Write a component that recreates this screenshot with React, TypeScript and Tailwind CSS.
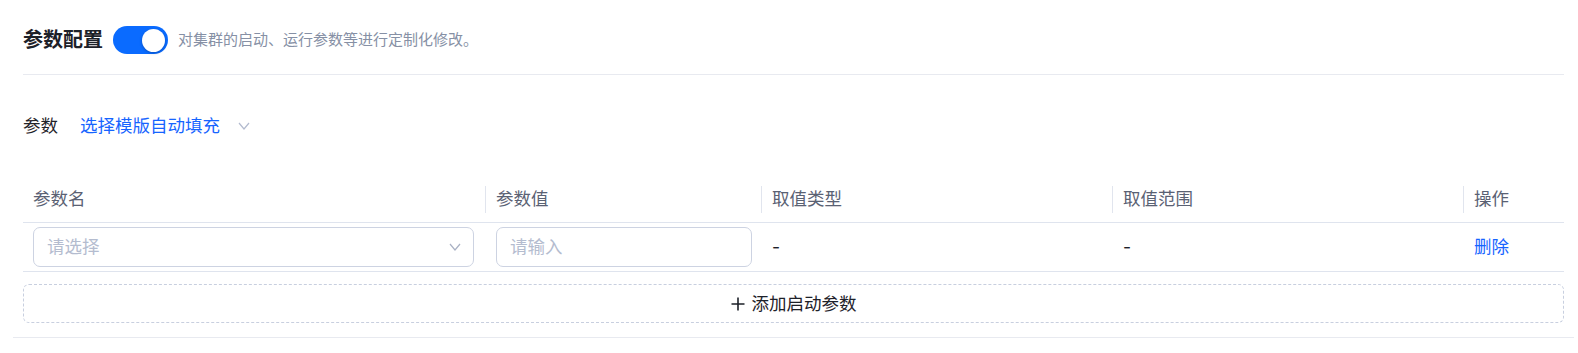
const font = "font-['Inter','Noto_Sans_CJK_SC',sans-serif]";

function Chevron({ className }: { className?: string }) {
  return (
    <svg width="12" height="8" viewBox="0 0 12 8" fill="none" className={className}>
      <polyline points="1,1 6,7 11,1" stroke="#b3bbcf" strokeWidth="1.2" />
    </svg>
  );
}

export default function App() {
  return (
    <div className={`min-h-screen bg-white ${font}`}>
      <div className="ml-[13px] mr-[4px] border-b border-[#e8eaf0] pb-[14px]">
        <div className="px-[10px] pt-[26px]">
          {/* title */}
          <div className="flex h-[28px] items-center">
            <h2 className="text-[20px] font-bold leading-[28px] text-[#1d2129]">参数配置</h2>
            <button className="ml-[10px] flex h-[28px] w-[55px] items-center justify-end rounded-full bg-[#0a6bff] pr-[3px]">
              <span className="h-[23px] w-[23px] rounded-full bg-white shadow-[0_1px_3px_rgba(0,0,0,0.25)]"></span>
            </button>
            <span className="ml-[10px] text-[15px] text-[#8690a5]">对集群的启动、运行参数等进行定制化修改。</span>
          </div>
          <div className="mt-[20px] h-px bg-[#e8eaf0]"></div>

          {/* template */}
          <div className="mt-[39px] flex h-[24px] items-center text-[17.5px] leading-[24px]">
            <span className="text-[#1f2329]">参数</span>
            <button className="ml-[22px] flex items-center text-[#1664ff]">
              选择模版自动填充
              <Chevron className="ml-[18px]" />
            </button>
          </div>

          {/* table */}
          <div className="mt-[38px] text-[17.5px] leading-[24px]">
            <div className="grid h-[47px] grid-cols-[462px_276px_351px_351px_1fr] border-b border-[#dfe4ee] text-[#5a6173]">
              <div className="flex items-center pl-[10px]">参数名</div>
              <div className="flex items-center">
                <span className="mr-[10px] h-[27px] w-px bg-[#e1e5ee]"></span>参数值
              </div>
              <div className="flex items-center">
                <span className="mr-[10px] h-[27px] w-px bg-[#e1e5ee]"></span>取值类型
              </div>
              <div className="flex items-center">
                <span className="mr-[10px] h-[27px] w-px bg-[#e1e5ee]"></span>取值范围
              </div>
              <div className="flex items-center">
                <span className="mr-[10px] h-[27px] w-px bg-[#e1e5ee]"></span>操作
              </div>
            </div>

            <div className="grid h-[49px] grid-cols-[462px_276px_351px_351px_1fr] border-b border-[#dfe4ee] text-[#1d2129]">
              <div className="flex items-center pl-[10px] pr-[11px]">
                <div className="flex h-[40px] w-full items-center justify-between rounded-[7px] border border-[#cdd3e2] pl-[13px] pr-[12px]">
                  <span className="text-[#b4bccf]">请选择</span>
                  <svg width="12" height="8" viewBox="0 0 12 8" fill="none">
                    <polyline points="1,1 6,7 11,1" stroke="#a9b1c4" strokeWidth="1.2" />
                  </svg>
                </div>
              </div>
              <div className="flex items-center pl-[11px] pr-[9px]">
                <div className="flex h-[40px] w-full items-center rounded-[7px] border border-[#cdd3e2] pl-[13px]">
                  <span className="text-[#b4bccf]">请输入</span>
                </div>
              </div>
              <div className="flex items-center pl-[11px]">-</div>
              <div className="flex items-center pl-[11px]">-</div>
              <div className="flex items-center pl-[11px]">
                <button className="text-[#1664ff]">删除</button>
              </div>
            </div>

            <button className="mt-[12px] flex h-[39px] w-full items-center justify-center gap-[7px] rounded-[6px] border border-dashed border-[#c8cfdf] text-[#1d2129]">
              <svg width="14" height="14" viewBox="0 0 14 14" fill="none">
                <path d="M7 0.5V13.5M0.5 7H13.5" stroke="#1d2129" strokeWidth="1.6" />
              </svg>
              添加启动参数
            </button>
          </div>
        </div>
      </div>
    </div>
  );
}
